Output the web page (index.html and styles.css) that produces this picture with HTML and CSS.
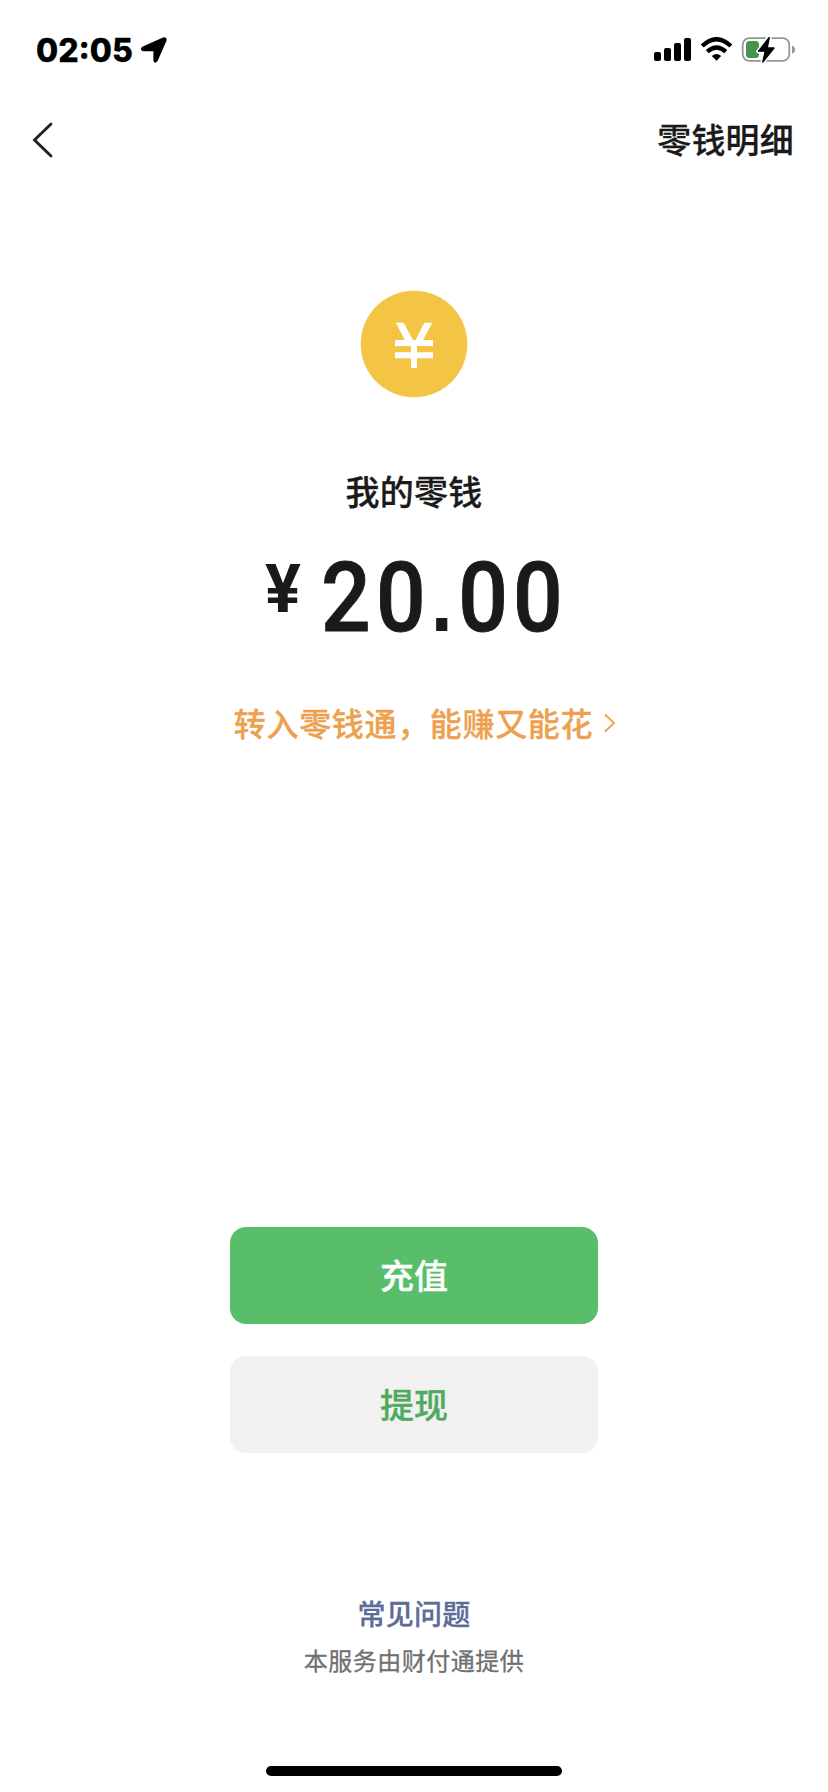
FILE: index.html
```html
<!DOCTYPE html>
<html lang="zh-CN">
<head>
<meta charset="utf-8">
<title>我的零钱</title>
<link rel="stylesheet" href="styles.css">
</head>
<body>
<div class="screen">
  <header class="status">
    <span class="time">02:05</span>
    <svg class="locate" width="28" height="28" viewBox="0 0 28 28"><path d="M2.800 10.600 23 1.500Q27.500.500 26.400 5L17.600 25Q15 28.500 13.400 25V15.200H3Q-1.200 13.500 2.800 10.600Z"/></svg>
    <svg class="signals" width="144" height="28" viewBox="0 0 144 28">
      <rect x="1" y="15" width="7" height="9" rx="2"/>
      <rect x="11" y="11" width="7" height="13" rx="2"/>
      <rect x="21" y="6" width="7" height="18" rx="2"/>
      <rect x="31" y="1" width="7" height="23" rx="2"/>
      <g fill="none" stroke="#000" stroke-width="4.300">
        <path d="M49.200 9Q63.500-4.600 77.800 9"/>
        <path d="M54.200 14.700Q63.500 6.200 72.800 14.700"/>
      </g>
      <path d="M58.800 19Q63.500 15 68.200 19L63.500 23.800Z"/>
      <rect x="89.700" y="1.200" width="46.600" height="22.600" rx="6.500" fill="none" stroke="#969696" stroke-width="1.800"/>
      <path d="M139 8.500Q142 9.500 142 12.500T139 16.500Z" fill="#969696"/>
      <rect x="93" y="4" width="13" height="17" rx="3.500" fill="#43964a"/>
      <path d="M116.500 0 105.500 14.300H112.200L109.700 25.200 121.200 11H114.400Z" stroke="#fff" stroke-width="4.500" stroke-linejoin="round"/>
      <path d="M116.300.300 105.500 14.200H112.200L109.800 25 121 11H114.200Z" stroke="#000" stroke-width="1.300" stroke-linejoin="round"/>
    </svg>
  </header>
  <nav class="nav">
    <svg width="22" height="38" viewBox="0 0 22 38"><path d="M19 3 2.500 19 19 35" fill="none" stroke="#222" stroke-width="2.900" stroke-linecap="round"/></svg>
    <a class="detail">零钱明细</a>
  </nav>
  <main class="balance">
    <svg class="coin" width="108" height="108" viewBox="0 0 108 108">
      <circle cx="54" cy="54" r="53.300" fill="#f4c544"/>
      <path d="M35.700 32.700H43.600L53 50H55.500L64.400 32.700H72.300L61.500 53H46.500Z" fill="#fff"/>
      <path d="M35 53H73M35 65.300H73M54 51V78" fill="none" stroke="#fff" stroke-width="6"/>
    </svg>
    <h1 class="title">我的零钱</h1>
    <div class="amount"><span class="currency">¥</span><span class="number">20<span class="point">.</span>00</span></div>
    <a class="promo"><span>转入零钱通，能赚又能花</span><svg width="14" height="22" viewBox="0 0 14 22"><path d="M2 2.500 11 11 2 19.500" fill="none" stroke="#eda455" stroke-width="2"/></svg></a>
  </main>
  <section class="actions">
    <button class="button primary">充值</button>
    <button class="button secondary">提现</button>
  </section>
  <footer class="footer">
    <a class="faq">常见问题</a>
    <p class="provider">本服务由财付通提供</p>
    <div class="home"></div>
  </footer>
</div>
</body>
</html>
```
FILE: styles.css
```css
* { box-sizing: border-box; }
body { margin: 0; background: #fff; }
.screen {
  width: 828px;
  height: 1792px;
  display: flex;
  flex-direction: column;
  font-family: "Noto Sans CJK SC", sans-serif;
  font-weight: 500;
  -webkit-text-stroke: .3px currentColor;
  color: #1a1a1a;
  background: #fff;
}
.status {
  height: 102px;
  padding: 0 31px 0 36px;
  display: flex;
  align-items: center;
  color: #000;
}
.time {
  width: 97px;
  margin-top: -1px;
  font: 800 32px/40px Inter, sans-serif;
  white-space: nowrap;
}
.locate { margin: -2px 0 0 7px; }
.signals { margin: 0 0 0 auto; }
.nav {
  height: 76px;
  padding: 0 34px 0 32px;
  display: flex;
  align-items: center;
  justify-content: space-between;
}
.detail, .title {
  font-size: 34px;
  line-height: 50px;
  font-weight: 500;
  letter-spacing: .2px;
}
.detail { margin-top: -2px; }
.balance {
  display: flex;
  flex-direction: column;
  align-items: center;
  padding-top: 112px;
}
.title { margin: 68px 0 0; }
.amount {
  display: flex;
  align-items: flex-start;
  width: 570px;
  padding-left: 136px;
  margin-top: 33px;
  height: 96px;
  font-family: Roboto, sans-serif;
  -webkit-text-stroke: 0;
}
.currency {
  width: 56px;
  font-size: 67px;
  line-height: 80px;
  font-weight: 700;
}
.number {
  font-size: 97px;
  line-height: 99px;
  font-weight: 500;
  letter-spacing: 5.9px;
  transform: scaleX(.9);
  transform-origin: left;
  -webkit-text-stroke: 1px currentColor;
}
.point {
  font-family: "Liberation Sans", sans-serif;
  font-weight: 700;
  font-size: 88px;
  line-height: 1;
  -webkit-text-stroke: 0;
}
.promo {
  margin: 53px 0 0 23px;
  display: flex;
  align-items: center;
  gap: 10px;
  height: 48px;
  font-size: 32px;
  letter-spacing: .67px;
  color: #eda04e;
}
.promo svg { margin-top: 2px; }
.actions {
  margin-top: 481px;
  display: flex;
  flex-direction: column;
  align-items: center;
  gap: 32px;
}
.button {
  width: 368px;
  height: 97px;
  padding: 0 0 2px;
  border: 0;
  border-radius: 16px;
  font: 500 34px/50px "Noto Sans CJK SC", sans-serif;
  -webkit-text-stroke: .3px currentColor;
}
.primary { color: #fff; background: #58be6a; }
.secondary { color: #4fa960; background: #f1f1f1; }
.footer {
  flex: 1;
  display: flex;
  flex-direction: column;
  align-items: center;
  padding: 139px 0 16px;
}
.faq { font-size: 28px; line-height: 42px; letter-spacing: .3px; color: #5c6b98; }
.provider { margin: 8px 0 0; font-size: 24px; line-height: 36px; letter-spacing: .5px; font-weight: 400; color: #707070; }
.home { margin-top: auto; width: 296px; height: 10px; border-radius: 5px; background: #000; }
```
